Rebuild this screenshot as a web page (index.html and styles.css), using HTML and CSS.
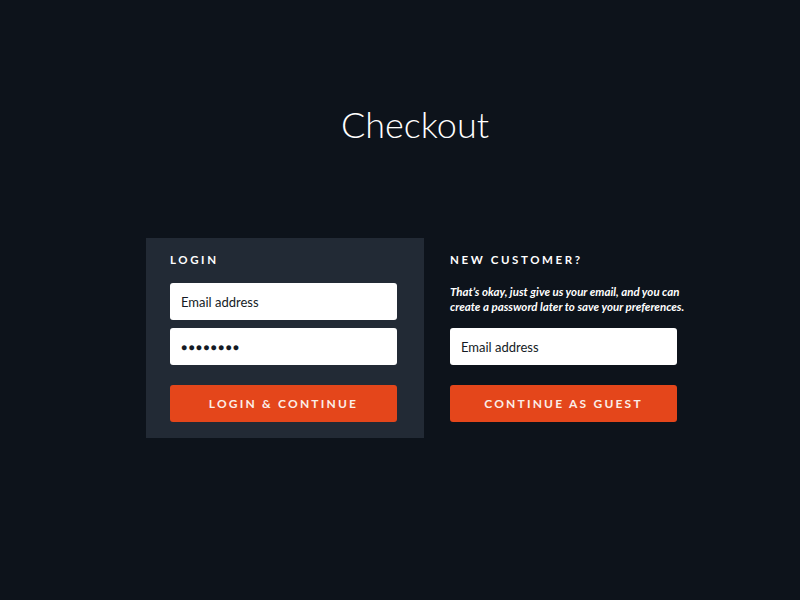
FILE: index.html
```html
<!DOCTYPE html>
<html>
<head>
<meta charset="utf-8">
<link rel="stylesheet" href="styles.css">
</head>
<body>
<div class="page">
  <h1 class="title">Checkout</h1>
  <div class="columns">
    <div class="box login">
      <h2 class="label">LOGIN</h2>
      <div class="field">Email address</div>
      <div class="field dots">&#9679;&#9679;&#9679;&#9679;&#9679;&#9679;&#9679;&#9679;</div>
      <div class="btn">LOGIN &amp; CONTINUE</div>
    </div>
    <div class="box guest">
      <h2 class="label">NEW CUSTOMER?</h2>
      <p class="note">That’s okay, just give us your email, and you can<br>create a password later to save your preferences.</p>
      <div class="field">Email address</div>
      <div class="btn">CONTINUE AS GUEST</div>
    </div>
  </div>
</div>
</body>
</html>
```
FILE: styles.css
```css
html, body {
  margin: 0;
  padding: 0;
  background: #0d131b;
  height: 100%;
}
body {
  font-family: Lato, "Open Sans", sans-serif;
  color: #ffffff;
}
.page {
  width: 800px;
  padding-top: 100px;
}
.title {
  margin: 0 0 0 30px;
  text-align: center;
  font-weight: 300;
  font-size: 36px;
  line-height: 48px;
  height: 48px;
}
.columns {
  display: flex;
  align-items: flex-start;
  margin: 90px 0 0 146px;
  gap: 2px;
}
.box {
  padding: 16px 27px 16px 24px;
  display: flex;
  flex-direction: column;
}
.login {
  width: 227px;
  background: #222a35;
}
.guest {
  width: 250px;
}
.guest .field, .guest .btn {
  width: 227px;
  box-sizing: border-box;
}
.label {
  margin: 0 0 17px 0;
  font-size: 11.5px;
  font-weight: 700;
  letter-spacing: 2.6px;
  line-height: 12px;
}
.guest .label {
  margin-bottom: 18px;
}
.note {
  margin: 0 0 14px 0;
  font-size: 11.5px;
  font-weight: 700;
  font-style: italic;
  line-height: 15px;
  white-space: nowrap;
}
.field {
  height: 37px;
  background: #ffffff;
  border-radius: 3px;
  color: #141a24;
  font-size: 13px;
  line-height: 38px;
  padding-left: 11px;
  margin-bottom: 8px;
}
.dots {
  font-size: 10px;
  letter-spacing: 1.4px;
}
.btn {
  margin-top: 12px;
  height: 37px;
  background: #e4461b;
  border-radius: 3px;
  color: #fbeee8;
  font-size: 12px;
  font-weight: 700;
  letter-spacing: 2.2px;
  line-height: 37px;
  text-align: center;
}
```
